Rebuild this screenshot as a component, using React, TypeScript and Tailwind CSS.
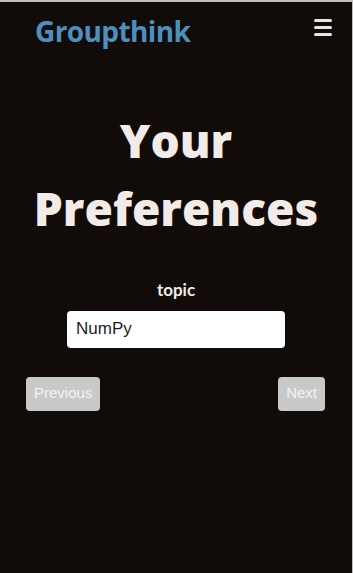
import * as React from 'react';

const App = () => {
    return (
        <div className="min-h-[573px] bg-[#110c0a] border-t-2 border-r border-[#bdbdbd] text-[#f2ebe7]">
            <header className="flex items-start justify-between pl-[35px] pr-[20px] pt-[8px]">
                <h1 className="text-[28px] font-bold text-[#4f8fbd] font-['Open_Sans',sans-serif] tracking-[-0.6px]">
                    Groupthink
                </h1>
                <div className="mt-[9px] flex flex-col gap-[4px] cursor-pointer" title="Menu">
                    <span className="block w-[18px] h-[3px] bg-[#ece4e0] rounded-sm" />
                    <span className="block w-[18px] h-[3px] bg-[#ece4e0] rounded-sm" />
                    <span className="block w-[18px] h-[3px] bg-[#ece4e0] rounded-sm" />
                </div>
            </header>
            <main className="flex flex-col items-center">
                <h2 className="mt-[54px] text-center text-[46px] leading-[68px] font-extrabold font-['Open_Sans',sans-serif]">
                    Your<br />Preferences
                </h2>
                <label className="mt-[35px] text-[17px] font-bold font-['Lato',sans-serif]" htmlFor="topic">
                    topic
                </label>
                <input
                    id="topic"
                    defaultValue="NumPy"
                    className="mt-[8px] w-[218px] h-[37px] rounded-[4px] bg-white px-[9px] text-[17px] text-[#1e1e1e] font-['Liberation_Sans',sans-serif] outline-none"
                />
                <div className="mt-[29px] w-full flex justify-between pl-[26px] pr-[27px]">
                    <button className="h-[34px] px-[8px] rounded-[4px] bg-[#c9c9c9] text-[#f4f4f4] text-[15px] font-['Liberation_Sans',sans-serif]">
                        Previous
                    </button>
                    <button className="h-[34px] px-[8px] rounded-[4px] bg-[#c9c9c9] text-[#f4f4f4] text-[15px] font-['Liberation_Sans',sans-serif]">
                        Next
                    </button>
                </div>
            </main>
        </div>
    );
};

export default App;
